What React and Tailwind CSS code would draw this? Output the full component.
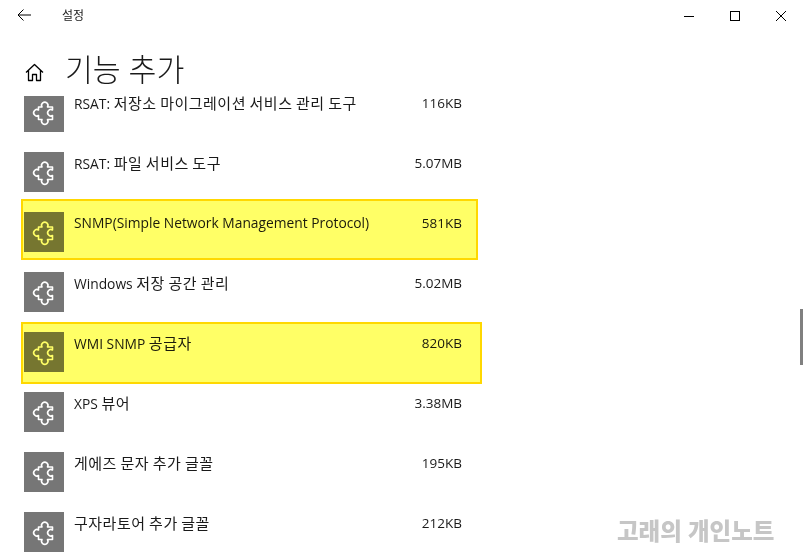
const font = { fontFamily: '"Open Sans", "Noto Sans CJK KR", sans-serif' };

const rows = [
  ["RSAT: 저장소 마이그레이션 서비스 관리 도구", "116KB"],
  ["RSAT: 파일 서비스 도구", "5.07MB"],
  ["SNMP(Simple Network Management Protocol)", "581KB"],
  ["Windows 저장 공간 관리", "5.02MB"],
  ["WMI SNMP 공급자", "820KB"],
  ["XPS 뷰어", "3.38MB"],
  ["게에즈 문자 추가 글꼴", "195KB"],
  ["구자라토어 추가 글꼴", "212KB"],
];

function PuzzleIcon() {
  return (
    <svg width="40" height="40" viewBox="0 0 40 40" fill="none" stroke="white" strokeWidth="1.6" strokeLinejoin="round">
      <path d="M14.500 15H18a3.200 3.200 0 1 1 5.500 0h5v3a3.200 3.200 0 1 0 0 5.500v4h-5a3.200 3.200 0 1 1-5.500 0h-3.500v-4a3.200 3.200 0 1 1 0-5.500z" />
    </svg>
  );
}

// hangul runs are set a little bigger than the latin around them
function Name({ text }) {
  const parts = text.split(/([가-힣]+)/);
  return (
    <>
      {parts.map((p, i) =>
        i % 2 === 1 ? (
          <span key={i} className="text-[15px] tracking-[0.5px]">{p}</span>
        ) : (
          <span key={i}>{p}</span>
        )
      )}
    </>
  );
}

function Row({ name, size }) {
  return (
    <div className="flex h-[60px] shrink-0 pl-6 w-[462px]">
      <div className="w-10 h-10 bg-[#767676] shrink-0">
        <PuzzleIcon />
      </div>
      <div className="ml-2.5 flex-1 text-[13.8px] leading-5 text-[#1a1a1a] whitespace-nowrap mt-[1px]">
        <Name text={name} />
      </div>
      <div className="text-[13.5px] leading-5 text-[#1a1a1a] mt-[1px]">{size}</div>
    </div>
  );
}

export default function App() {
  return (
    <div className="relative w-[804px] h-[554px] bg-white overflow-hidden flex flex-col" style={font}>
      <div className="h-8 flex items-center shrink-0">
        <svg width="14" height="12" viewBox="0 0 14 12" fill="none" stroke="black" strokeWidth="1" className="ml-[17px] -mt-[2px]">
          <path d="M14 6H1M6.500 .5 1 6l5.500 5.500" />
        </svg>
        <span className="ml-[31px] text-[12px] text-[#1a1a1a]">설정</span>
        <div className="ml-auto flex items-center gap-[36px] pr-[18px]">
          <svg width="10" height="10" viewBox="0 0 10 10" fill="none" stroke="black" strokeWidth="1">
            <path d="M0 5.500h10" />
          </svg>
          <svg width="10" height="10" viewBox="0 0 10 10" fill="none" stroke="black" strokeWidth="1">
            <rect x=".5" y=".5" width="9" height="9" />
          </svg>
          <svg width="10" height="10" viewBox="0 0 10 10" fill="none" stroke="black" strokeWidth="1">
            <path d="M0 0l10 10M10 0 0 10" />
          </svg>
        </div>
      </div>
      <div className="flex h-16 shrink-0 pl-[25px]">
        <svg width="19" height="19" viewBox="0 0 19 19" fill="none" stroke="black" strokeWidth="1.300" strokeLinejoin="round" className="mt-[31px]">
          <path d="M1 9.500 9.500 1.500 18 9.500M3.500 7.500v10h4v-6h4v6h4v-10" />
        </svg>
        <h1 className="ml-[21px] mt-[17px] text-[30.3px] font-light text-[#1a1a1a] leading-[42px]">기능 추가</h1>
      </div>
      <div className="flex-1 overflow-hidden">
        <div className="flex flex-col -mt-1">
          {rows.map((r) => (
            <Row key={r[0]} name={r[0]} size={r[1]} />
          ))}
        </div>
      </div>

      <div className="absolute left-[21px] top-[199px] w-[457px] h-[61px] bg-[#ffff66] border-2 border-[#ffd800] mix-blend-multiply" />
      <div className="absolute left-[21px] top-[322px] w-[461px] h-[62px] bg-[#ffff66] border-2 border-[#ffd800] mix-blend-multiply" />

      <div className="absolute left-[800px] top-[309px] w-[3px] h-[56px] bg-[#808080]" />
      <div className="absolute left-[617px] top-[513px] text-[23.5px] font-black text-[#c6c6c6] leading-9 whitespace-nowrap">고래의 개인노트</div>
    </div>
  );
}
